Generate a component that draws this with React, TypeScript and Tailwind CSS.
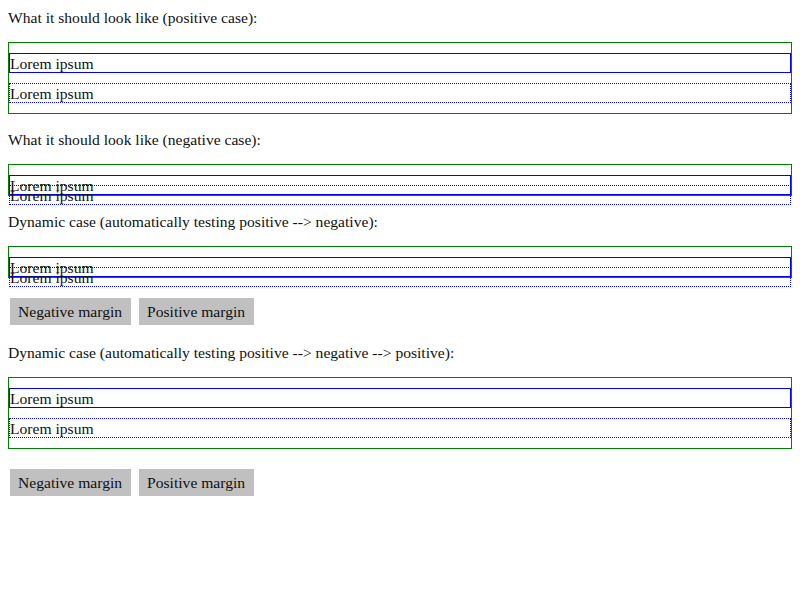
function Case({ negative }: { negative: boolean }) {
  return (
    <div className="mt-4 border border-[#008000]">
      <div className="mt-[10px] border border-[#0000ff] pt-[1px] leading-[17px]">Lorem ipsum</div>
      <div
        className={
          negative
            ? "-mt-[10px] -mb-[10px] border border-dotted border-[#0000ff] pt-[1px] leading-[17px]"
            : "mt-[10px] mb-[10px] border border-dotted border-[#0000ff] pt-[1px] leading-[17px]"
        }
      >
        Lorem ipsum
      </div>
    </div>
  );
}

function Buttons() {
  return (
    <div className="mt-4 pt-[4px] pb-[2px] pl-[2px] flex gap-2">
      <button className="h-[27px] pl-2 pr-[9px] bg-[#c0c0c0] text-[#111]">Negative margin</button>
      <button className="h-[27px] pl-2 pr-[9px] bg-[#c0c0c0] text-[#111]">Positive margin</button>
    </div>
  );
}

export default function App() {
  return (
    <div className="p-2 font-['Liberation_Serif',serif] text-[15.6px] leading-[18px] text-[#111] bg-white">
      <div className="pt-[1px] leading-[17px]">What it should look like (positive case):</div>
      <Case negative={false} />

      <div className="mt-4 pt-[1px] leading-[17px]">What it should look like (negative case):</div>
      <Case negative={true} />

      <div className="mt-4 pt-[1px] leading-[17px]">Dynamic case (automatically testing positive --&gt; negative):</div>
      <Case negative={true} />
      <Buttons />

      <div className="mt-4 pt-[1px] leading-[17px]">
        Dynamic case (automatically testing positive --&gt; negative --&gt; positive):
      </div>
      <Case negative={false} />
      <Buttons />
    </div>
  );
}
